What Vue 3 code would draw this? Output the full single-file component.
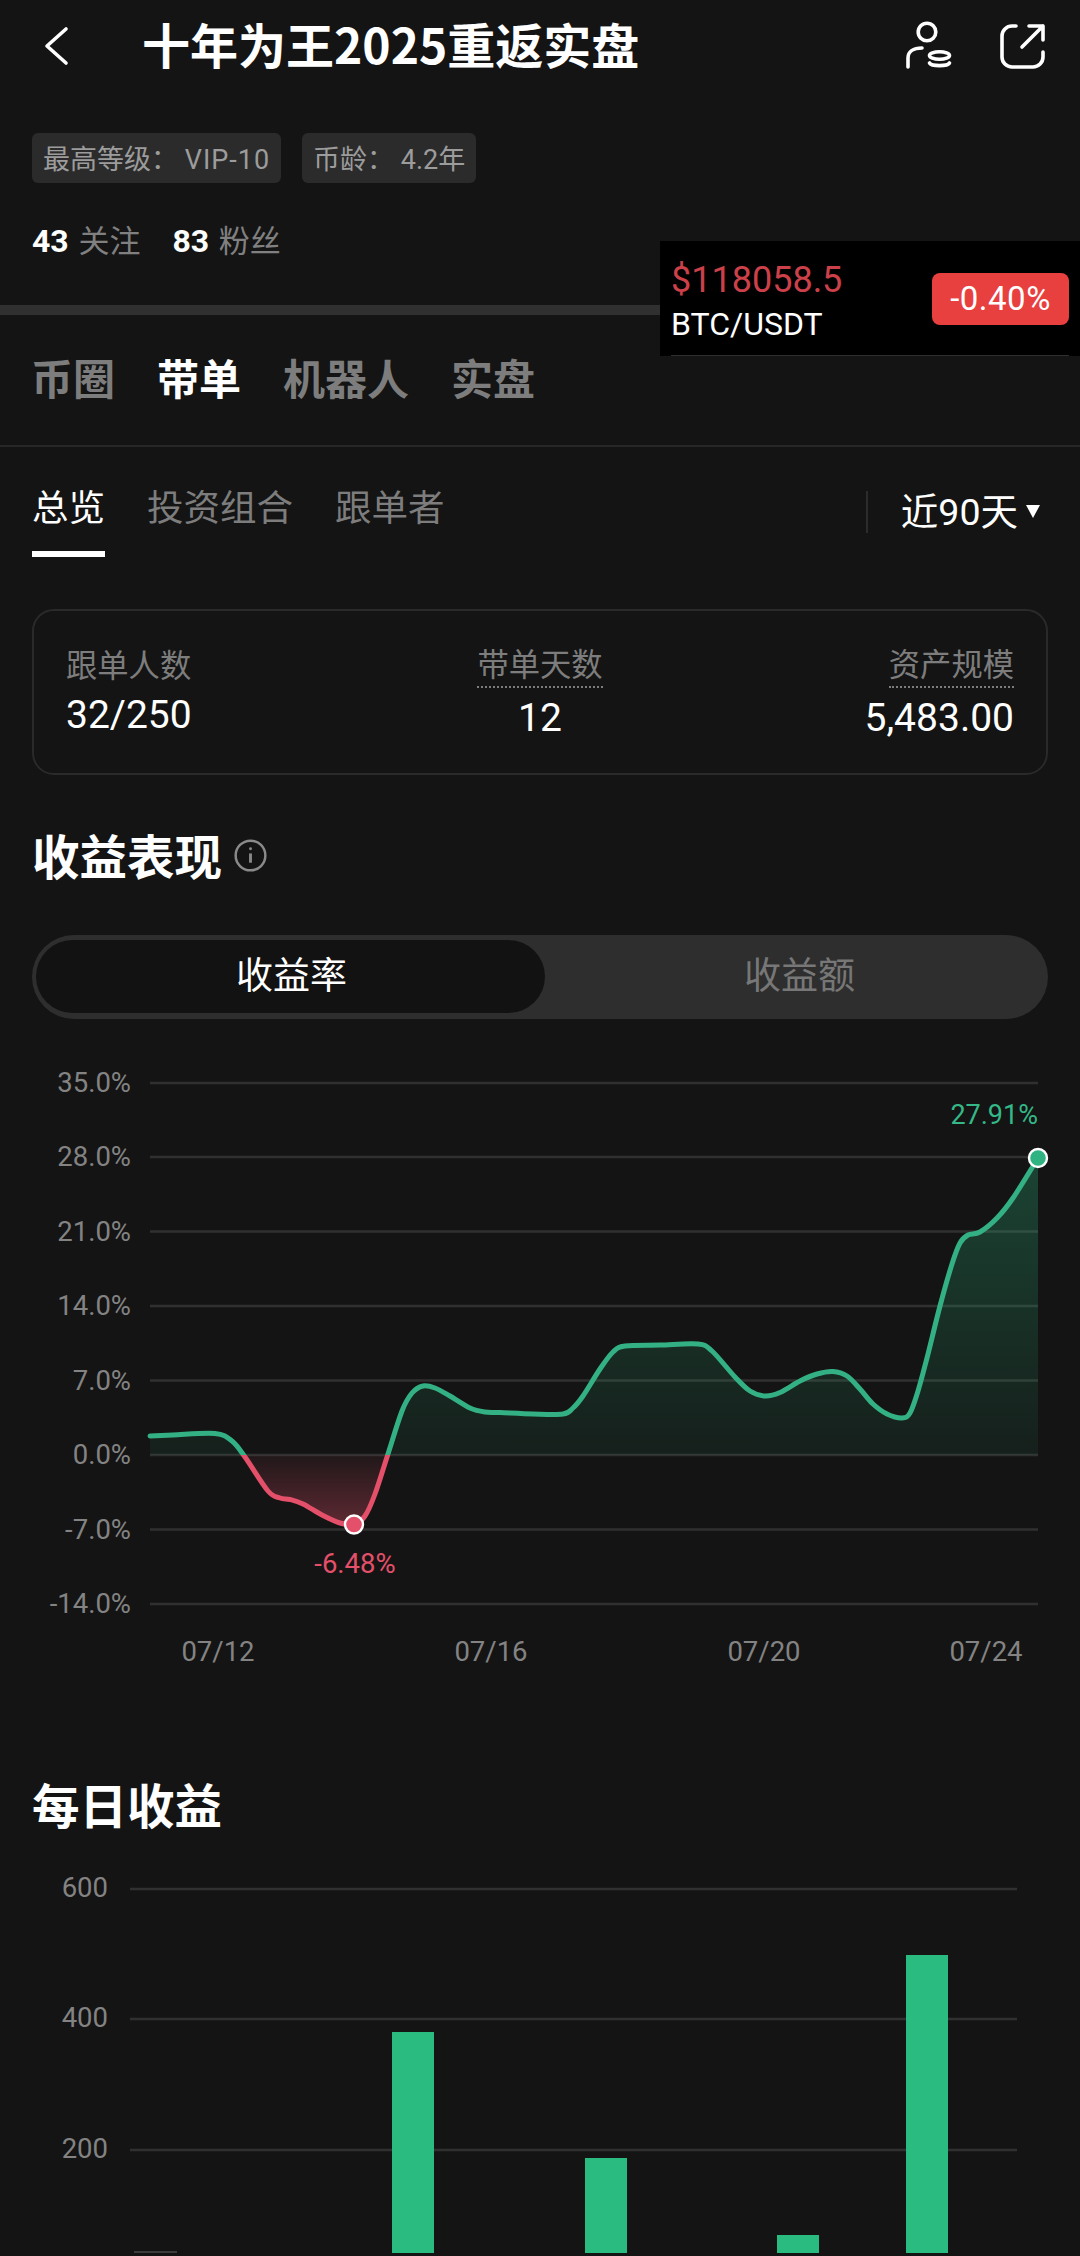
<template>
  <div class="page">
    <header class="topbar">
      <svg class="back" viewBox="0 0 28 40" fill="none" stroke="#fff" stroke-width="3.6" stroke-linecap="round" stroke-linejoin="round">
        <path d="M23 3 4 20l19 17" />
      </svg>
      <h1 class="title">十年为王2025重返实盘</h1>
      <svg class="icon-user" viewBox="905 20 48 52" fill="none" stroke="#fff" stroke-width="3.6" stroke-linecap="round">
        <circle cx="927" cy="32" r="8.8" />
        <path d="M908 67V58c0-6 5-10 14-10" />
        <ellipse cx="939.5" cy="55.5" rx="10" ry="3.8" />
        <path d="M929.5 63c2 3.5 18 3.5 20 0" />
      </svg>
      <svg class="icon-share" viewBox="999 20 48 50" fill="none" stroke="#fff" stroke-width="3.6" stroke-linecap="round" stroke-linejoin="round">
        <path d="M1016 25h-4a10 10 0 0 0-10 10v21a10 10 0 0 0 10 10h21a10 10 0 0 0 10-10v-5" />
        <path d="M1022 46l21-21M1029 25h14v14" />
      </svg>
    </header>

    <div class="tags">
      <span class="tag">最高等级： <span class="tag-level">VIP-10</span></span>
      <span class="tag">币龄： 4.2年</span>
    </div>

    <div class="stats">
      <span><b>43</b> 关注</span>
      <span><b>83</b> 粉丝</span>
    </div>

    <div class="thick-bar"></div>

    <nav class="main-tabs">
      <span v-for="t in mainTabs" :key="t" :class="{ on: t === '带单' }">{{ t }}</span>
    </nav>

    <div class="sub-tabs">
      <span v-for="t in subTabs" :key="t" class="sub-tab" :class="{ on: t === '总览' }">{{ t }}</span>
      <div class="period">近90天<i class="caret"></i></div>
    </div>

    <section class="summary">
      <div v-for="s in summary" :key="s.label" class="summary-col" :class="s.align">
        <span class="summary-label" :class="{ dotted: s.dotted }">{{ s.label }}</span>
        <span class="summary-value">{{ s.value }}</span>
      </div>
    </section>

    <h2 class="heading">
      收益表现
      <svg class="info" viewBox="0 0 32 32" fill="none" stroke="#8a8a8a" stroke-width="2.4">
        <circle cx="16" cy="16" r="14.4" />
        <path d="M16 14v9" stroke-width="2.8" />
        <circle cx="16" cy="9.5" r="1.4" fill="#8a8a8a" stroke="none" />
      </svg>
    </h2>

    <div class="switch">
      <span class="switch-item on">收益率</span>
      <span class="switch-item">收益额</span>
    </div>

    <svg class="line-chart" viewBox="0 1018 1080 662" width="1080" height="662">
      <defs>
        <linearGradient id="greenFill" x1="0" y1="1157" x2="0" y2="1454" gradientUnits="userSpaceOnUse">
          <stop offset="0" stop-color="#2bb37c" stop-opacity="0.3" />
          <stop offset="1" stop-color="#2bb37c" stop-opacity="0.07" />
        </linearGradient>
        <linearGradient id="redFill" x1="0" y1="1454" x2="0" y2="1525" gradientUnits="userSpaceOnUse">
          <stop offset="0" stop-color="#e4506a" stop-opacity="0.06" />
          <stop offset="1" stop-color="#e4506a" stop-opacity="0.36" />
        </linearGradient>
        <clipPath id="above"><rect x="0" y="1018" width="1080" height="436" /></clipPath>
        <clipPath id="below"><rect x="0" y="1454" width="1080" height="226" /></clipPath>
      </defs>

      <g v-for="g in lineGrid" :key="g.label">
        <line x1="150" x2="1038" :y1="g.y" :y2="g.y" stroke="#303030" stroke-width="2.4" />
        <text class="axis" x="131" :y="g.y + 9" text-anchor="end">{{ g.label }}</text>
      </g>

      <path :d="areaPath" fill="url(#greenFill)" clip-path="url(#above)" />
      <path :d="areaPath" fill="url(#redFill)" clip-path="url(#below)" />
      <path :d="linePath" fill="none" stroke="#34b184" stroke-width="5" stroke-linecap="round" clip-path="url(#above)" />
      <path :d="linePath" fill="none" stroke="#e4506a" stroke-width="5" stroke-linecap="round" clip-path="url(#below)" />

      <circle cx="354" cy="1523.5" r="9" fill="#e4506a" stroke="#fff" stroke-width="2.4" />
      <circle cx="1038" cy="1157" r="9" fill="#2fb383" stroke="#fff" stroke-width="2.4" />
      <text class="axis green" x="1038" y="1123" text-anchor="end">27.91%</text>
      <text class="axis red" x="355" y="1572" text-anchor="middle">-6.48%</text>

      <text v-for="d in lineDates" :key="d.label" class="axis" :x="d.x" y="1660" text-anchor="middle">{{ d.label }}</text>
    </svg>

    <h2 class="heading daily">每日收益</h2>

    <svg class="bar-chart" viewBox="0 1841 1080 415" width="1080" height="415">
      <g v-for="g in barGrid" :key="g.label">
        <line x1="130" x2="1017" :y1="g.y" :y2="g.y" stroke="#303030" stroke-width="2.4" />
        <text class="axis" x="108" :y="g.y + 8" text-anchor="end">{{ g.label }}</text>
      </g>
      <line x1="134" x2="177" y1="2251" y2="2251" stroke="#4a4a4a" stroke-width="1.5" />
      <rect v-for="b in bars" :key="b.x" :x="b.x" :y="b.top" width="42" :height="2252 - b.top" fill="#2abb80" />
    </svg>

    <div class="ticker">
      <div class="ticker-left">
        <div class="ticker-price">$118058.5</div>
        <div class="ticker-pair">BTC/USDT</div>
      </div>
      <div class="ticker-badge">-0.40%</div>
    </div>
  </div>
</template>

<script setup>
const mainTabs = ['币圈', '带单', '机器人', '实盘']
const subTabs = ['总览', '投资组合', '跟单者']

const summary = [
  { label: '跟单人数', value: '32/250', align: 'left' },
  { label: '带单天数', value: '12', align: 'center', dotted: true },
  { label: '资产规模', value: '5,483.00', align: 'right', dotted: true },
]

const lineGrid = [
  { label: '35.0%', y: 1082 },
  { label: '28.0%', y: 1156 },
  { label: '21.0%', y: 1230.5 },
  { label: '14.0%', y: 1305 },
  { label: '7.0%', y: 1379.5 },
  { label: '0.0%', y: 1454 },
  { label: '-7.0%', y: 1528.5 },
  { label: '-14.0%', y: 1603 },
]

const lineDates = [
  { label: '07/12', x: 218 },
  { label: '07/16', x: 491 },
  { label: '07/20', x: 764 },
  { label: '07/24', x: 986 },
]

const barGrid = [
  { label: '600', y: 1888 },
  { label: '400', y: 2018 },
  { label: '200', y: 2149 },
]

const bars = [
  { x: 392, top: 2031 },
  { x: 585, top: 2157 },
  { x: 777, top: 2234 },
  { x: 906, top: 1954 },
]

// curve points read off the chart
const pts = [
  [150, 1435], [173, 1434], [215, 1432.5], [232, 1440], [245, 1456], [268, 1490], [280, 1497],
  [290, 1498.5], [303, 1503], [322, 1514], [340, 1522], [354, 1523.5], [365, 1515], [375, 1493],
  [388, 1453], [402, 1410], [412, 1392], [423, 1385], [435, 1387], [450, 1395], [470, 1407],
  [485, 1411], [500, 1411.5], [533, 1413], [563, 1413], [573, 1407], [583, 1395], [600, 1368],
  [613, 1351], [625, 1345], [660, 1344], [698, 1343], [712, 1350], [735, 1376], [750, 1390],
  [765, 1395], [780, 1391.5], [800, 1380], [817, 1373], [833, 1370.5], [847, 1375], [860, 1388],
  [873, 1403], [887, 1413], [902, 1417], [910, 1412], [918, 1390], [927, 1357], [940, 1305],
  [952, 1263], [960, 1242], [968, 1234], [980, 1231], [997, 1217], [1013, 1197], [1038, 1157],
]

function smooth(points) {
  let d = `M${points[0][0]} ${points[0][1]}`
  for (let i = 0; i < points.length - 1; i++) {
    const p0 = points[i - 1] || points[i]
    const p1 = points[i]
    const p2 = points[i + 1]
    const p3 = points[i + 2] || p2
    const c1x = p1[0] + (p2[0] - p0[0]) / 6
    const c1y = p1[1] + (p2[1] - p0[1]) / 6
    const c2x = p2[0] - (p3[0] - p1[0]) / 6
    const c2y = p2[1] - (p3[1] - p1[1]) / 6
    d += `C${c1x} ${c1y} ${c2x} ${c2y} ${p2[0]} ${p2[1]}`
  }
  return d
}

const linePath = smooth(pts)
const areaPath = `${linePath}L1038 1454L150 1454Z`
</script>

<style>
body {
  background: #141414;
}
</style>

<style scoped>
.page {
  position: relative;
  width: 1080px;
  height: 2256px;
  overflow: hidden;
  background: #141414;
  color: #fff;
  font-family: Roboto, "Noto Sans CJK SC", sans-serif;
}

.topbar {
  display: flex;
  align-items: center;
  height: 92px;
  padding: 0 33px 0 43px;
}

.back {
  width: 28px;
  height: 40px;
}

.title {
  margin: 0 0 6px 71px;
  flex: 1;
  font-family: "Noto Sans CJK SC", sans-serif;
  font-size: 48px;
  font-weight: 700;
  line-height: 60px;
}

.icon-user {
  width: 48px;
  height: 52px;
}

.icon-share {
  width: 48px;
  height: 50px;
  margin-left: 46px;
}

.tags {
  display: flex;
  gap: 21px;
  margin: 41px 0 0 32px;
}

.tag {
  height: 50px;
  padding: 0 11px;
  border-radius: 6px;
  background: #2b2b2b;
  color: #9c9c9c;
  font-size: 27px;
  line-height: 54px;
  white-space: pre;
}

.tag-level {
  letter-spacing: 1px;
}

.stats {
  display: flex;
  gap: 32px;
  margin: 38px 0 0 32px;
  color: #808080;
  font-size: 31px;
  line-height: 40px;
}

.stats b {
  margin-right: 2px;
  color: #fff;
  font-size: 32px;
  font-weight: 700;
}

.thick-bar {
  height: 10px;
  margin-top: 43px;
  background: #303030;
}

.main-tabs {
  box-sizing: border-box;
  display: flex;
  align-items: center;
  gap: 42px;
  height: 132px;
  padding: 0 0 8px 31px;
  border-bottom: 2px solid #272727;
  color: #7d7d7d;
  font-size: 42px;
  font-weight: 700;
}

.main-tabs .on {
  color: #fff;
}

.sub-tabs {
  display: flex;
  gap: 42px;
  height: 110px;
  padding-left: 32px;
  color: #7d7d7d;
  font-size: 36.5px;
}

.sub-tab {
  box-sizing: border-box;
  height: 110px;
  padding-top: 42px;
  line-height: 40px;
}

.sub-tab.on {
  color: #fff;
  border-bottom: 6px solid #fff;
}

.period {
  box-sizing: border-box;
  display: flex;
  align-items: center;
  align-self: flex-start;
  height: 42px;
  margin: 44px 40px 0 auto;
  padding: 0 0 8px 33px;
  border-left: 2px solid #2c2c2c;
  color: #fff;
  font-size: 37.5px;
}

.caret {
  width: 0;
  height: 0;
  margin: 6px 0 0 8px;
  border-top: 13px solid #fff;
  border-left: 7px solid transparent;
  border-right: 7px solid transparent;
}

.summary {
  box-sizing: border-box;
  display: grid;
  grid-template-columns: repeat(3, 1fr);
  height: 166px;
  margin: 52px 32px 0;
  padding: 35px 32px 0;
  border: 2px solid #2a2a2a;
  border-radius: 22px;
}

.summary-col {
  display: flex;
  flex-direction: column;
}

.summary-col.center {
  align-items: center;
}

.summary-col.right {
  align-items: flex-end;
}

.summary-label {
  color: #7d7d7d;
  font-size: 31.3px;
  line-height: 42px;
}

.summary-label.dotted {
  border-bottom: 2px dotted #7d7d7d;
  line-height: 40px;
  margin-bottom: 3px;
}

.summary-value {
  margin-top: 5px;
  font-size: 39px;
  line-height: 44px;
}

.heading {
  display: flex;
  align-items: center;
  gap: 12px;
  margin: 48px 0 0 32px;
  font-family: "Noto Sans CJK SC", sans-serif;
  font-size: 47.5px;
  font-weight: 700;
  line-height: 64px;
}

.heading.daily {
  margin: 91px 0 6px 32px;
}

.info {
  width: 33px;
  height: 33px;
}

.switch {
  box-sizing: border-box;
  display: flex;
  height: 84px;
  margin: 48px 32px 0;
  padding: 5px 4px 6px;
  border-radius: 42px;
  background: #2e2e2e;
}

.switch-item {
  flex: 1;
  padding-left: 10px;
  color: #777;
  font-size: 37px;
  line-height: 73px;
  text-align: center;
}

.switch-item.on {
  flex: 0 0 509px;
  padding-left: 2px;
  box-sizing: border-box;
  border-radius: 37px;
  background: #121212;
  color: #fff;
}

.line-chart,
.bar-chart {
  display: block;
}

.axis {
  fill: #838383;
  font-family: Roboto, sans-serif;
  font-size: 27.5px;
}

.axis.green {
  fill: #35b888;
  font-size: 27px;
}

.axis.red {
  fill: #e4506a;
}

/* floating price widget */
.ticker {
  position: absolute;
  top: 241px;
  right: 0;
  box-sizing: border-box;
  display: flex;
  align-items: center;
  justify-content: space-between;
  width: 420px;
  height: 115px;
  padding: 0 11px;
  background: #000;
}

.ticker::after {
  content: "";
  position: absolute;
  left: 11px;
  right: 11px;
  bottom: 0;
  height: 1px;
  background: #2e2e2e;
}

.ticker-left {
  padding-top: 3px;
}

.ticker-price {
  color: #cc4049;
  font-size: 36px;
  line-height: 44px;
}

.ticker-pair {
  margin-top: 3px;
  font-size: 32px;
  line-height: 38px;
}

.ticker-badge {
  width: 137px;
  height: 52px;
  border-radius: 8px;
  background: #e8403f;
  font-size: 33px;
  letter-spacing: 0.5px;
  line-height: 52px;
  text-align: center;
}
</style>
